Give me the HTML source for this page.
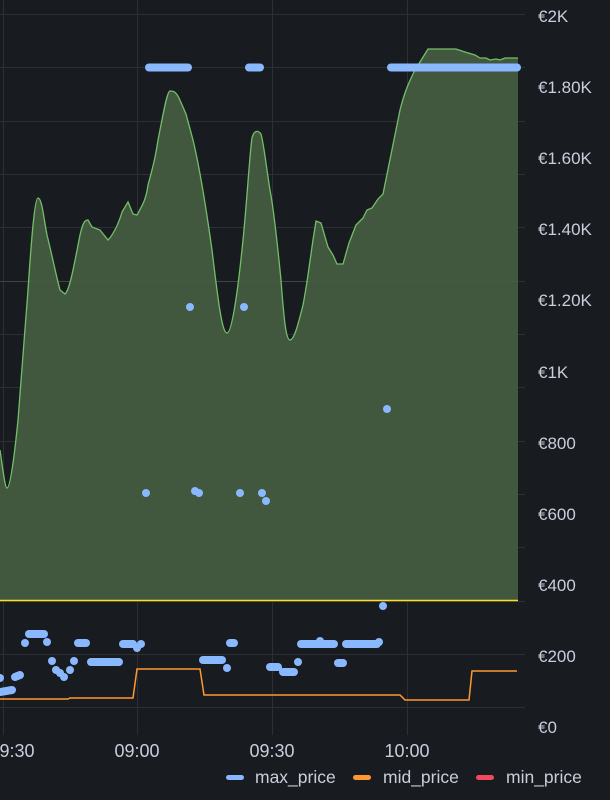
<!DOCTYPE html>
<html><head><meta charset="utf-8"><style>
html,body{margin:0;padding:0;background:#181b1f;}
svg{display:block}
text{font-family:"Liberation Sans",sans-serif;fill:#ccccdc}
</style></head><body>
<svg width="610" height="800" viewBox="0 0 610 800">
<rect width="610" height="800" fill="#181b1f"/>
<g stroke="#2c2f34" stroke-width="1">
<line x1="0" x2="525" y1="14.5" y2="14.5"/><line x1="0" x2="525" y1="67.5" y2="67.5"/>
<line x1="0" x2="525" y1="121.5" y2="121.5"/><line x1="0" x2="525" y1="174.5" y2="174.5"/>
<line x1="0" x2="525" y1="227.5" y2="227.5"/><line x1="0" x2="525" y1="281.5" y2="281.5"/>
<line x1="0" x2="525" y1="334.5" y2="334.5"/><line x1="0" x2="525" y1="387.5" y2="387.5"/>
<line x1="0" x2="525" y1="441.5" y2="441.5"/><line x1="0" x2="525" y1="494.5" y2="494.5"/>
<line x1="0" x2="525" y1="547.5" y2="547.5"/><line x1="0" x2="525" y1="601.5" y2="601.5"/>
<line x1="0" x2="525" y1="654.5" y2="654.5"/><line x1="0" x2="525" y1="707.5" y2="707.5"/>
<line x1="3.5" x2="3.5" y1="0" y2="735"/><line x1="137.5" x2="137.5" y1="0" y2="735"/>
<line x1="272.5" x2="272.5" y1="0" y2="735"/><line x1="407.5" x2="407.5" y1="0" y2="735"/>
</g>
<path d="M0,450 C3,470 5,488 7,488 C10,488 14,460 18,420 L28,290 C32,230 35,198 38,198 C42,198 44,220 47,235 C52,255 56,275 60,290 L65,294 C70,290 75,260 80,235 C83,222 85,220 88,220 L92,227 L100,230 L108,240 C112,236 118,226 122,212 L128,202 L133,214 L137,215 C142,206 146,200 148,185 C152,170 155,160 158,140 C163,115 167,91 170,91 C174,91 176,92 179,98 L186,114 L193,140 C199,165 205,200 212,250 C218,300 222,333 227,333 C232,333 238,290 243,240 C247,200 250,150 252,138 C254,130 258,130 261,134 C264,145 266,165 270,190 C274,210 278,250 281,280 C284,320 286,340 290,340 C294,340 298,325 303,305 C307,285 310,260 313,240 L316,221 L321,223 L328,247 L333,255 L337,264 L343,264 L349,243 L356,225 L363,218 L367,210 L372,208 L378,199 L383,194 C388,170 393,145 400,110 C405,90 410,80 415,70 L420,62 L428,49 L456,49 L465,52 L475,55 L480,58 L486,58 L490,60 L496,59 L500,60 L505,58 L518,58 L518,600 L0,600 Z" fill="#42583e" stroke="none"/>
<g stroke="#4a5e46" stroke-width="1">
<line x1="0" x2="518" y1="281.5" y2="281.5" stroke-opacity="0.5"/>
</g>
<path d="M0,450 C3,470 5,488 7,488 C10,488 14,460 18,420 L28,290 C32,230 35,198 38,198 C42,198 44,220 47,235 C52,255 56,275 60,290 L65,294 C70,290 75,260 80,235 C83,222 85,220 88,220 L92,227 L100,230 L108,240 C112,236 118,226 122,212 L128,202 L133,214 L137,215 C142,206 146,200 148,185 C152,170 155,160 158,140 C163,115 167,91 170,91 C174,91 176,92 179,98 L186,114 L193,140 C199,165 205,200 212,250 C218,300 222,333 227,333 C232,333 238,290 243,240 C247,200 250,150 252,138 C254,130 258,130 261,134 C264,145 266,165 270,190 C274,210 278,250 281,280 C284,320 286,340 290,340 C294,340 298,325 303,305 C307,285 310,260 313,240 L316,221 L321,223 L328,247 L333,255 L337,264 L343,264 L349,243 L356,225 L363,218 L367,210 L372,208 L378,199 L383,194 C388,170 393,145 400,110 C405,90 410,80 415,70 L420,62 L428,49 L456,49 L465,52 L475,55 L480,58 L486,58 L490,60 L496,59 L500,60 L505,58 L518,58" fill="none" stroke="#73bf69" stroke-width="1.3"/>
<line x1="0" x2="518" y1="600.5" y2="600.5" stroke="#fade2a" stroke-width="1.5"/>
<path d="M0,699 L68,699 L70,698 L133,698 L137,669 L200,669 L204,695 L400,695 L405,700 L469,700 L472,671 L517,671" fill="none" stroke="#ff9830" stroke-width="1.5"/>
<g stroke="#8ab8ff" stroke-width="8" stroke-linecap="round">
<line x1="149" x2="188" y1="67.5" y2="67.5"/><line x1="249" x2="260" y1="67.5" y2="67.5"/><line x1="391" x2="517" y1="67.5" y2="67.5"/>
<line x1="29" x2="44" y1="634" y2="634"/><line x1="78" x2="86" y1="643" y2="643"/>
<line x1="91" x2="119" y1="662" y2="662"/><line x1="123" x2="133" y1="644" y2="644"/>
<line x1="203" x2="222" y1="660" y2="660"/><line x1="230" x2="234" y1="643" y2="643"/>
<line x1="270" x2="278" y1="667" y2="667"/><line x1="283" x2="294" y1="672" y2="672"/>
<line x1="301" x2="334" y1="644" y2="644"/><line x1="346" x2="377" y1="644" y2="644"/>
<line x1="338" x2="343" y1="663" y2="663"/><line x1="0" x2="12" y1="692" y2="690"/><line x1="15" x2="20" y1="677" y2="675"/>
</g>
<g fill="#8ab8ff">
<circle cx="190" cy="307" r="4"/><circle cx="244" cy="307" r="4"/><circle cx="146" cy="493" r="4"/>
<circle cx="195" cy="491" r="4"/><circle cx="199" cy="493" r="4"/><circle cx="240" cy="493" r="4"/>
<circle cx="262" cy="493" r="4"/><circle cx="266" cy="501" r="4"/><circle cx="387" cy="409" r="4"/>
<circle cx="383" cy="606" r="4"/><circle cx="25" cy="643" r="4"/><circle cx="47" cy="642" r="4"/>
<circle cx="52" cy="661" r="4"/><circle cx="56" cy="670" r="4"/><circle cx="60" cy="673" r="4"/>
<circle cx="64" cy="677" r="4"/><circle cx="70" cy="670" r="4"/><circle cx="74" cy="661" r="4"/>
<circle cx="0" cy="678" r="4"/><circle cx="137" cy="648" r="4"/><circle cx="141" cy="644" r="4"/>
<circle cx="227" cy="668" r="4"/><circle cx="298" cy="662" r="4"/><circle cx="320" cy="641" r="4"/>
<circle cx="379" cy="642" r="4"/>
</g>
<g font-size="17">
<text x="538" y="22">€2K</text><text x="538" y="93">€1.80K</text><text x="538" y="164">€1.60K</text>
<text x="538" y="235">€1.40K</text><text x="538" y="306">€1.20K</text><text x="538" y="378">€1K</text>
<text x="538" y="449">€800</text><text x="538" y="520">€600</text><text x="538" y="591">€400</text>
<text x="538" y="662">€200</text><text x="538" y="733">€0</text>
</g>
<g font-size="18" text-anchor="middle">
<text x="12" y="757">09:30</text><text x="137" y="757">09:00</text><text x="272" y="757">09:30</text><text x="407" y="757">10:00</text>
</g>
<rect x="226" y="775" width="18" height="5" rx="2.5" fill="#8ab8ff"/>
<rect x="353" y="775" width="18" height="5" rx="2.5" fill="#ff9830"/>
<rect x="476" y="775" width="18" height="5" rx="2.5" fill="#f2495c"/>
<g font-size="17.5"><text x="255" y="783">max_price</text><text x="383" y="783">mid_price</text><text x="506" y="783">min_price</text></g>
</svg>
</body></html>
